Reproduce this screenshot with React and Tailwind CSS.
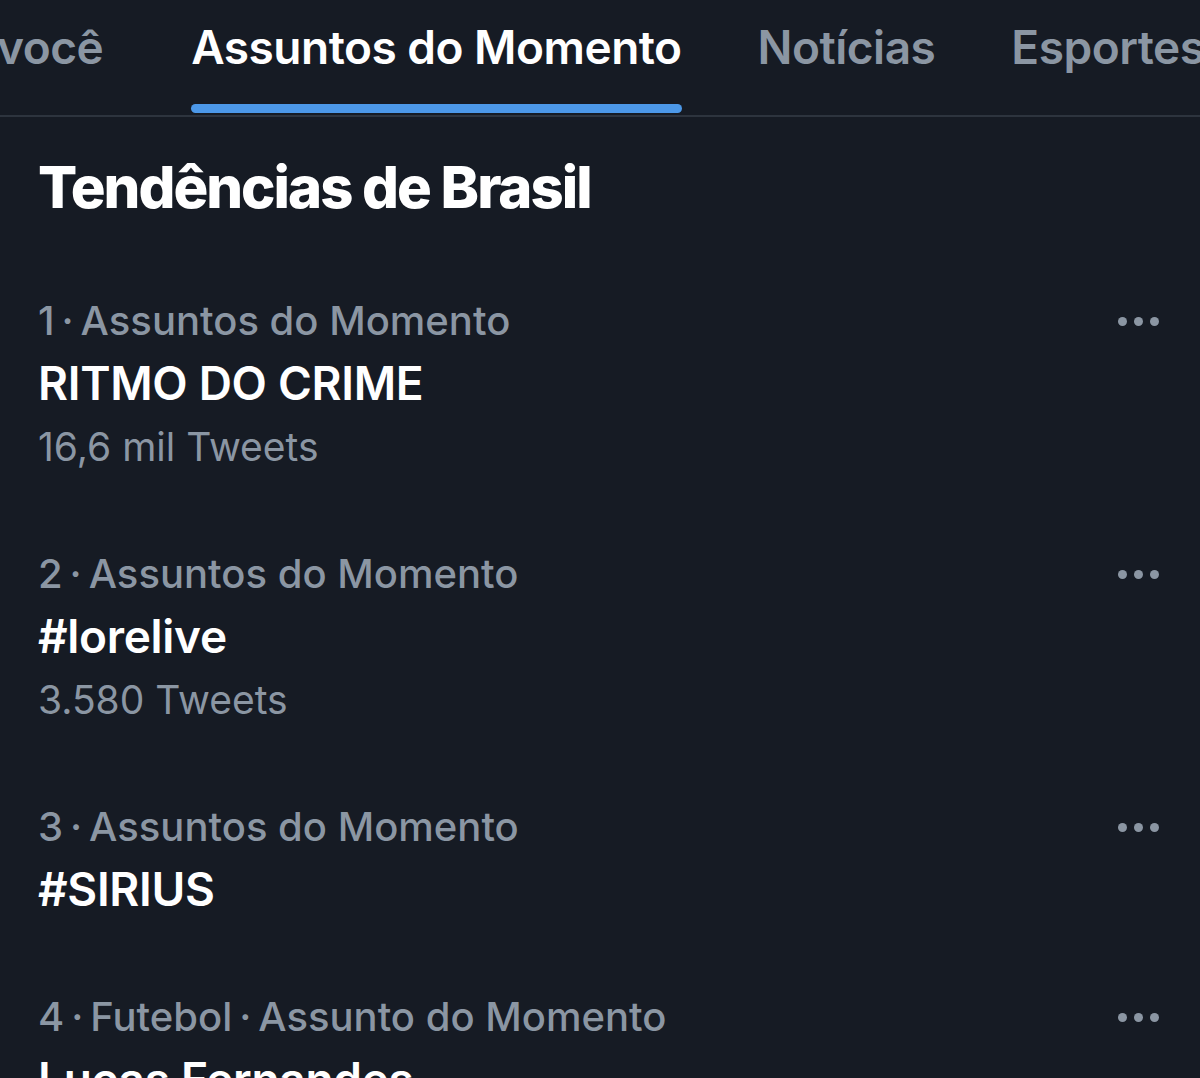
const tabs = ["Para você", "Assuntos do Momento", "Notícias", "Esportes", "Entretenimento"];
const ACTIVE = 1;

const trends = [
  { rank: "1", topic: "Assuntos do Momento", name: "RITMO DO CRIME", count: "16,6 mil Tweets" },
  { rank: "2", topic: "Assuntos do Momento", name: "#lorelive", count: "3.580 Tweets" },
  { rank: "3", topic: "Assuntos do Momento", name: "#SIRIUS" },
  { rank: "4", topic: "Futebol\u2009·\u2009Assunto do Momento", name: "Lucas Fernandes", count: "2.104 Tweets" },
];

function Dots() {
  return (
    <div className="flex items-center gap-[7px] pt-[1px]">
      <span className="h-[9px] w-[9px] rounded-full bg-[#8b96a3]" />
      <span className="h-[9px] w-[9px] rounded-full bg-[#8b96a3]" />
      <span className="h-[9px] w-[9px] rounded-full bg-[#8b96a3]" />
    </div>
  );
}

export default function App() {
  return (
    <div
      className="h-[1078px] w-[1200px] overflow-hidden bg-[#161b24]"
      style={{ fontFamily: "Inter, 'Noto Sans', sans-serif" }}
    >
      <div className="border-b-2 border-[#2d343e]">
        <div className="-ml-[112px] flex gap-[76px] whitespace-nowrap pt-[19px]">
          {tabs.map((t, i) => (
            <div key={t} className={`flex flex-col ${i === 0 ? "mr-[12px]" : ""}`}>
              <span
                className={`text-[46px] leading-[56px] font-semibold tracking-[-0.5px] ${
                  i === ACTIVE ? "text-white" : "text-[#8b96a3]"
                }`}
              >
                {t}
              </span>
              <span
                className={`mt-[29px] mb-[2px] h-[9px] rounded-full ${
                  i === ACTIVE ? "bg-[#4c98e8]" : "bg-transparent"
                }`}
              />
            </div>
          ))}
        </div>
      </div>

      <h1 className="mt-[35px] mb-[35px] pl-[38px] text-[58px] leading-[70px] font-extrabold tracking-[-2px] text-white">
        Tendências de Brasil
      </h1>

      <div>
        {trends.map((t) => (
          <div key={t.rank} className="py-[32px] pl-[38px] pr-[41px]">
            <div className="flex items-center justify-between">
              <span className="whitespace-nowrap text-[40px] leading-[63px] font-medium text-[#8b96a3]">
                {t.rank}
                {"\u2009·\u2009"}
                {t.topic}
              </span>
              <Dots />
            </div>
            <div className="text-[46px] leading-[63px] font-semibold tracking-[-0.3px] text-white">
              {t.name}
            </div>
            {t.count && (
              <div className="text-[39px] leading-[63px] font-normal text-[#8b96a3]">
                {t.count}
              </div>
            )}
          </div>
        ))}
      </div>
    </div>
  );
}
